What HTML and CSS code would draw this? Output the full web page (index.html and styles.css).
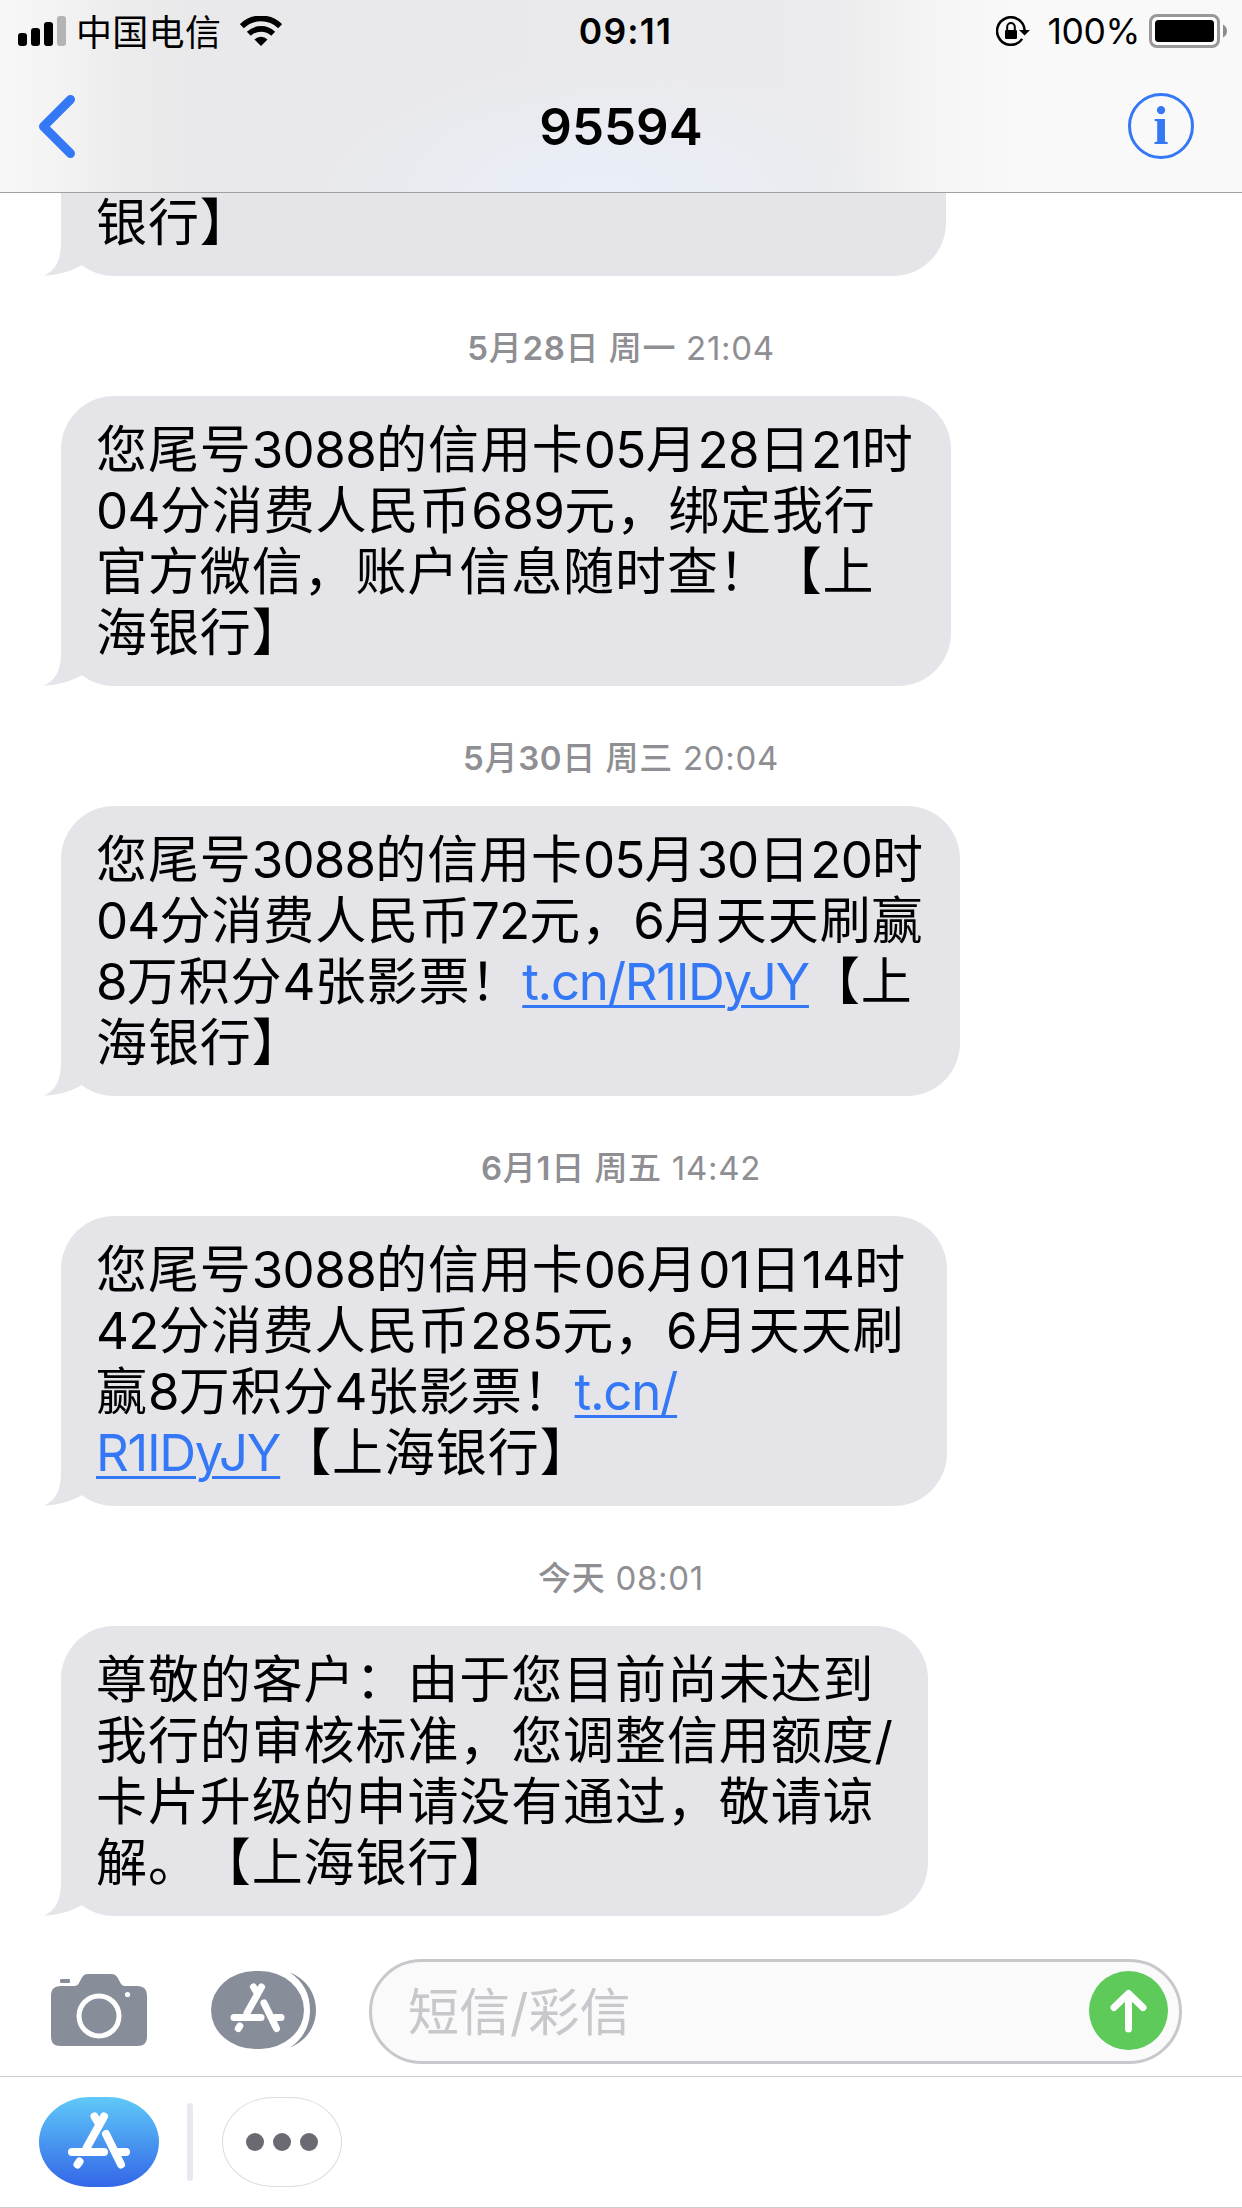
FILE: index.html
```html
<!DOCTYPE html>
<html lang="zh-CN">
<head>
    <meta charset="UTF-8">
    <meta name="viewport" content="width=device-width, initial-scale=1.0">
    <title>95594</title>
    <link rel="stylesheet" href="styles.css">
</head>
<body>
    <div class="screen">
        <header class="header">
            <div class="status-bar">
                <div class="status-left">
                    <svg class="signal" width="48" height="30" viewBox="0 0 48 30">
                        <rect x="0" y="17" width="9" height="13" rx="3"/>
                        <rect x="13" y="12" width="9" height="18" rx="3"/>
                        <rect x="26" y="6" width="9" height="24" rx="3"/>
                        <rect x="39" y="0" width="9" height="30" rx="3" fill="#b4b4b5"/>
                    </svg>
                    <span class="carrier">中国电信</span>
                    <svg class="wifi" width="42" height="30" viewBox="0 0 42 30">
                        <path d="M1.8 10.2 A27.5 27.5 0 0 1 40.2 10.2" fill="none" stroke="#000" stroke-width="5.8"/>
                        <path d="M8.800 17.800 A17.500 17.500 0 0 1 33.200 17.800" fill="none" stroke="#000" stroke-width="5.600"/>
                        <path d="M14.5 23.4 A9.5 9.5 0 0 1 27.5 23.4 L21 30 Z"/>
                    </svg>
                </div>
                <div class="clock">09:11</div>
                <div class="status-right">
                    <svg class="lock" width="35" height="30" viewBox="0 0 35 30">
                        <path d="M26.2 22.9 A13.8 13.8 0 1 1 28.6 14" fill="none" stroke="#000" stroke-width="2.5"/>
                        <path d="M23 14 H34 L28.6 19.6 Z"/>
                        <rect x="9" y="14" width="12" height="9" rx="1.2"/>
                        <path d="M11.2 14.5 V10.8 a3.8 3.8 0 0 1 7.6 0 V14.5" fill="none" stroke="#000" stroke-width="2"/>
                    </svg>
                    <span class="percent">100%</span>
                    <svg class="battery" width="78" height="34" viewBox="0 0 78 34">
                        <rect x="1.5" y="1.5" width="68" height="31" rx="6.5" fill="#fff" stroke="#989898" stroke-width="3"/>
                        <rect x="6" y="6" width="59" height="22" rx="3.5"/>
                        <path d="M74 10.5 Q78 12.5 78 17 Q78 21.5 74 23.5 Z" fill="#8d8d8d"/>
                    </svg>
                </div>
            </div>
            <div class="nav-bar">
                <svg class="back" width="36" height="63" viewBox="0 0 36 63">
                    <path d="M31.5 4.5 L4.5 31.5 L31.5 58.5" fill="none" stroke="#3478f6" stroke-width="9" stroke-linecap="round" stroke-linejoin="round"/>
                </svg>
                <h1 class="title">95594</h1>
                <div class="info">i</div>
            </div>
        </header>

        <main class="messages">
            <div class="bubble bubble-cut">银行】
                <svg class="tail" width="40" height="48" viewBox="0 0 40 48"><path d="M17 0 V14 C17 32 12 42 0 47.5 C16 47 28 43 38 37 L40 0 Z"/></svg>
            </div>

            <div class="time"><b>5<i>月</i>28<i>日 周一</i></b> 21:04</div>
            <div class="bubble w-890">
                <span class="line">您尾号<span class="num">3088</span>的信用卡<span class="num">05</span>月<span class="num">28</span>日<span class="num">21</span>时</span>
                <span class="line"><span class="num">04</span>分消费人民币<span class="num">689</span>元，绑定我行</span>
                <span class="line">官方微信，账户信息随时查！【上</span>
                <span class="line">海银行】</span>
                <svg class="tail" width="40" height="48" viewBox="0 0 40 48"><path d="M17 0 V14 C17 32 12 42 0 47.5 C16 47 28 43 38 37 L40 0 Z"/></svg>
            </div>

            <div class="time"><b>5<i>月</i>30<i>日 周三</i></b> 20:04</div>
            <div class="bubble w-899">
                <span class="line">您尾号<span class="num">3088</span>的信用卡<span class="num">05</span>月<span class="num">30</span>日<span class="num">20</span>时</span>
                <span class="line"><span class="num">04</span>分消费人民币<span class="num">72</span>元，<span class="num">6</span>月天天刷赢</span>
                <span class="line"><span class="num">8</span>万积分<span class="num">4</span>张影票！<a class="link">t.cn/R1IDyJY</a>【上</span>
                <span class="line">海银行】</span>
                <svg class="tail" width="40" height="48" viewBox="0 0 40 48"><path d="M17 0 V14 C17 32 12 42 0 47.5 C16 47 28 43 38 37 L40 0 Z"/></svg>
            </div>

            <div class="time"><b>6<i>月</i>1<i>日 周五</i></b> 14:42</div>
            <div class="bubble w-886">
                <span class="line">您尾号<span class="num">3088</span>的信用卡<span class="num">06</span>月<span class="num">01</span>日<span class="num">14</span>时</span>
                <span class="line"><span class="num">42</span>分消费人民币<span class="num">285</span>元，<span class="num">6</span>月天天刷</span>
                <span class="line">赢<span class="num">8</span>万积分<span class="num">4</span>张影票！<a class="link">t.cn/</a></span>
                <span class="line"><a class="link">R1IDyJY</a>【上海银行】</span>
                <svg class="tail" width="40" height="48" viewBox="0 0 40 48"><path d="M17 0 V14 C17 32 12 42 0 47.5 C16 47 28 43 38 37 L40 0 Z"/></svg>
            </div>

            <div class="time"><b><i>今天</i></b> 08:01</div>
            <div class="bubble w-867">
                <span class="line">尊敬的客户：由于您目前尚未达到</span>
                <span class="line">我行的审核标准，您调整信用额度/</span>
                <span class="line">卡片升级的申请没有通过，敬请谅</span>
                <span class="line">解。【上海银行】</span>
                <svg class="tail" width="40" height="48" viewBox="0 0 40 48"><path d="M17 0 V14 C17 32 12 42 0 47.5 C16 47 28 43 38 37 L40 0 Z"/></svg>
            </div>
        </main>

        <div class="compose">
            <svg class="camera" width="96" height="72" viewBox="0 0 96 72">
                <path fill="#878e99" d="M10 12 H22 C26 12 27 11 28.500 8 L31 3.500 C32.500 1 34 0 37 0 H60 C63 0 65 1 66.500 3.500 L69.500 9 C71 11.500 72 12 76 12 H86 C93 12 96 15.500 96 22 V62 C96 69 93 72 86 72 H10 C3 72 0 69 0 62 V22 C0 15.500 3 12 10 12 Z"/>
                <rect x="9" y="5" width="10" height="4" rx="1.200" fill="#878e99"/>
                <circle cx="48" cy="42" r="20" fill="none" stroke="#fff" stroke-width="5"/>
                <circle cx="76.500" cy="20.500" r="2.600" fill="#fff"/>
            </svg>
            <svg class="apps" width="105" height="78" viewBox="0 0 105 78">
                <path fill="#878e99" d="M79 1.500 C95 8 105 22 105 39 C105 56 95 70 79 76.500 C92 68 99 55 99 39 C99 23 92 10 79 1.500 Z"/>
                <rect x="0" y="0" width="93" height="78" rx="44" ry="39" fill="#878e99"/>
                <g fill="none" stroke="#fff" stroke-width="7" stroke-linecap="round">
                    <path d="M42.500 16 L46.500 22.500"/>
                    <path d="M50.500 16 L36 42"/>
                    <path d="M23 46.500 H50"/>
                    <path d="M64 46.500 H70"/>
                    <path d="M28.800 55 L27.300 57.500"/>
                    <path d="M53 32 L65.500 57.500"/>
                </g>
            </svg>
            <div class="field">
                <span class="placeholder">短信/彩信</span>
                <svg class="send" width="79" height="79" viewBox="0 0 79 79">
                    <circle cx="39.500" cy="39.500" r="39.500" fill="#5dca5a"/>
                    <path d="M39.500 58 V24 M25 36.500 L39.500 22.500 L54 36.500" fill="none" stroke="#fff" stroke-width="7" stroke-linecap="round" stroke-linejoin="round"/>
                </svg>
            </div>
        </div>

        <div class="app-strip">
            <svg class="store" width="120" height="90" viewBox="0 0 120 90">
                <defs>
                    <linearGradient id="blue" x1="0" y1="0" x2="0" y2="1">
                        <stop offset="0" stop-color="#5fc9f8"/>
                        <stop offset="1" stop-color="#3366e8"/>
                    </linearGradient>
                </defs>
                <rect x="0" y="0" width="120" height="90" rx="51" ry="45" fill="url(#blue)"/>
                <g fill="none" stroke="#fff" stroke-width="8" stroke-linecap="round">
                    <path d="M55.500 19.500 L60 27"/>
                    <path d="M65 19.500 L47.500 51"/>
                    <path d="M33 55 H65"/>
                    <path d="M79 55 H87"/>
                    <path d="M40.500 64.500 L38.500 67.500"/>
                    <path d="M67 37 L82 67.500"/>
                </g>
            </svg>
            <div class="divider"></div>
            <div class="more">
                <span class="dot"></span>
                <span class="dot"></span>
                <span class="dot"></span>
            </div>
        </div>
    </div>
</body>
</html>
```
FILE: styles.css
```css
* {
    margin: 0;
    padding: 0;
    box-sizing: border-box;
}

body {
    background-color: #fff;
    font-family: Inter, "Noto Sans CJK SC", sans-serif;
    color: #000;
    text-spacing-trim: space-all;
}

svg {
    display: block;
    flex: none;
}

.screen {
    width: 1242px;
    height: 2208px;
    display: flex;
    flex-direction: column;
    overflow: hidden;
}

.header {
    height: 193px;
    flex: none;
    border-bottom: 1px solid #a0a0a4;
    background:
        radial-gradient(ellipse 300px 130px at 600px 100%, #e9eef8, rgba(233, 238, 248, 0)),
        linear-gradient(to right, #f7f7f7 0, #f3f3f3 60px, #ececed 120px, #e9e9eb 200px, #e9e9eb 420px, #ebebed 830px, #f0f0f1 880px, #f5f5f6 940px, #f9f9f9 1020px);
}

.status-bar {
    height: 60px;
    display: grid;
    grid-template-columns: 1fr auto 1fr;
    align-items: center;
    padding: 0 15px 0 18px;
    font-size: 36px;
    line-height: 60px;
}

.status-left,
.status-right {
    display: flex;
    align-items: center;
}

.status-right {
    justify-content: flex-end;
}

.carrier {
    margin-left: 10px;
    padding-top: 2px;
    height: 60px;
    letter-spacing: 0.3px;
}

.wifi {
    margin-left: 19px;
}

.clock {
    padding: 2px 0 0 6px;
    font-weight: 600;
    font-size: 35.5px;
    letter-spacing: 1.2px;
}

.percent {
    margin: 0 9px 0 17px;
    padding-top: 2px;
    font-size: 35.5px;
    letter-spacing: -0.4px;
}

.nav-bar {
    height: 132px;
    display: grid;
    grid-template-columns: 1fr auto 1fr;
    align-items: center;
    padding: 0 48px 0 39px;
}

.title {
    padding: 2px 0 0 9px;
    font-size: 51px;
    font-weight: 600;
    line-height: 130px;
}

.info {
    justify-self: end;
    width: 66px;
    height: 66px;
    border: 3px solid #3478f6;
    border-radius: 50%;
    color: #3478f6;
    font-family: "Liberation Serif", serif;
    font-weight: bold;
    font-size: 55px;
    line-height: 59px;
    text-align: center;
}

.messages {
    height: 1747px;
    flex: none;
    display: flex;
    flex-direction: column;
    align-items: flex-start;
    padding-left: 61px;
}

.bubble {
    position: relative;
    height: 290px;
    flex: none;
    padding: 23px 0 0 35px;
    border-radius: 53px;
    background-color: #e5e4e9;
    font-size: 51px;
    line-height: 61px;
    letter-spacing: 0.9px;
    white-space: nowrap;
}

.bubble-cut {
    width: 885px;
    height: 83px;
    padding-top: 0;
    line-height: 59px;
    border-radius: 0 0 53px 53px;
}

.w-890 {
    width: 890px;
}

.w-899 {
    width: 899px;
}

.w-886 {
    width: 886px;
}

.w-867 {
    width: 867px;
}

.line {
    display: block;
    height: 61px;
}

.num {
    letter-spacing: -0.6px;
}

.w-899 .num {
    letter-spacing: -0.8px;
}

.link {
    color: #3478f6;
    letter-spacing: -1.3px;
    text-decoration: underline;
    text-decoration-thickness: 3px;
    text-underline-offset: 5px;
}

.tail {
    position: absolute;
    left: -17px;
    bottom: 0;
    fill: #e5e4e9;
}

.time {
    width: 1120px;
    height: 120px;
    flex: none;
    padding-top: 12px;
    color: #8e8e93;
    font-size: 33px;
    line-height: 120px;
    letter-spacing: 0.7px;
    text-align: center;
}

.time b {
    font-weight: 600;
}

.time i {
    font-style: normal;
    font-weight: 500;
}

.compose {
    height: 137px;
    flex: none;
    display: flex;
    align-items: center;
    padding: 7px 60px 0 51px;
    border-bottom: 1px solid #cdcdd0;
}

.camera,
.apps,
.send {
    margin-bottom: 3px;
}

.apps {
    margin-left: 64px;
}

.field {
    margin-left: 53px;
    width: 813px;
    height: 105px;
    display: flex;
    justify-content: space-between;
    align-items: center;
    padding: 0 11px 0 36px;
    border: 3px solid #c7c7cc;
    border-radius: 53px;
    background-color: #fafafa;
}

.placeholder {
    padding-top: 2px;
    color: #c7c7cc;
    font-size: 51px;
    line-height: 97px;
}

.app-strip {
    height: 131px;
    flex: none;
    display: flex;
    align-items: center;
    padding-left: 39px;
    border-bottom: 1px solid #cdcdd0;
}

.divider {
    width: 6px;
    height: 78px;
    margin: 0 29px 0 28px;
    border-radius: 3px;
    background-color: #e8e8f0;
}

.more {
    width: 120px;
    height: 90px;
    display: flex;
    justify-content: center;
    align-items: center;
    gap: 9px;
    border: 1px solid #dcdcde;
    border-radius: 51px / 45px;
}

.dot {
    width: 18px;
    height: 18px;
    border-radius: 50%;
    background-color: #6b6a73;
}
```
